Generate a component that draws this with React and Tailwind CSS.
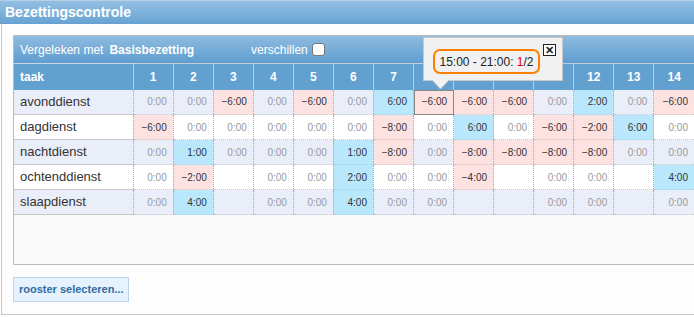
import React from 'react';

// Bezettingscontrole: differences per task and day
const rows = [
  { taak: 'avonddienst', cells: ['0:00', '0:00', '-6:00', '0:00', '-6:00', '0:00', '6:00', '-6:00', '-6:00', '-6:00', '0:00', '2:00', '0:00', '-6:00'] },
  { taak: 'dagdienst', cells: ['-6:00', '0:00', '0:00', '0:00', '0:00', '0:00', '-8:00', '0:00', '6:00', '0:00', '-6:00', '-2:00', '6:00', '0:00'] },
  { taak: 'nachtdienst', cells: ['0:00', '1:00', '0:00', '0:00', '0:00', '1:00', '-8:00', '0:00', '-8:00', '-8:00', '-8:00', '-8:00', '0:00', '0:00'] },
  { taak: 'ochtenddienst', cells: ['0:00', '-2:00', '', '0:00', '0:00', '2:00', '0:00', '0:00', '-4:00', '', '0:00', '0:00', '', '4:00'] },
  { taak: 'slaapdienst', cells: ['0:00', '4:00', '', '0:00', '0:00', '4:00', '0:00', '0:00', '', '', '0:00', '0:00', '', '0:00'] },
];

const days = Array.from({ length: 14 }, (_, i) => i + 1);

function Cell({ value, odd, active }) {
  let bg = odd ? 'bg-[#e9eef9]' : 'bg-white';
  let color = 'text-[#9a9a9a]';
  if (value.startsWith('-')) {
    bg = 'bg-[#fde2e2]';
    color = 'text-[#333]';
  } else if (value && value !== '0:00') {
    bg = 'bg-[#b9e8fd]';
    color = 'text-[#333]';
  }
  return (
    <td
      className={`${bg} ${color} h-[25px] pr-[6px] text-right text-[10px] border-l border-dotted border-l-[#aaa] border-b border-b-[#c8c8c8] ${active ? 'outline outline-1 outline-[#888] -outline-offset-1' : ''}`}
    >
      {value.replace('-', '\u2212')}
    </td>
  );
}

export default function App() {
  return (
    <div className="w-[694px] h-[317px] overflow-hidden bg-white font-['Liberation_Sans',Arial,sans-serif] relative">
      <div className="h-[24px] bg-gradient-to-b from-[#92bfe2] via-[#7db2dc] to-[#68a1d1] border-t border-[#b8cfe3] flex items-center pl-[5px]">
        <span className="text-white font-bold text-[14px]">Bezettingscontrole</span>
      </div>

      <div className="ml-[1px] border-l border-b border-[#c8c8c8] h-[291px] bg-[#fdfdfd] pt-[11px] pl-[11px]">
        <div className="w-[700px] border border-[#bbb] bg-[#fafafa] h-[230px]">
          <div className="h-[27px] bg-gradient-to-b from-[#8ebbe0] to-[#5f9dcf] flex items-center pl-[6px] text-white text-[12px]">
            <span>Vergeleken met</span>
            <span className="font-bold ml-[6px]">Basisbezetting</span>
            <span className="ml-[57px]">verschillen</span>
            <span className="ml-[4px] w-[13px] h-[13px] bg-white border border-[#777] rounded-[3px]"></span>
          </div>

          <table className="table-fixed border-collapse w-[680px]">
            <thead>
              <tr className="bg-[#62a0d0] h-[26px] text-white text-[12px] font-bold">
                <th className="w-[119px] text-left pl-[6px] border-t border-[#c8d8e6]">taak</th>
                {days.map((d) => (
                  <th key={d} className="w-[40px] text-center border-l border-t border-[#c0ccd6]">{d}</th>
                ))}
              </tr>
            </thead>
            <tbody>
              {rows.map((r, ri) => (
                <tr key={r.taak}>
                  <td className={`${ri % 2 === 0 ? 'bg-[#e9eef9]' : 'bg-white'} h-[25px] pl-[6px] text-[13px] text-[#333] border-b border-b-[#c8c8c8]`}>
                    {r.taak}
                  </td>
                  {r.cells.map((v, ci) => (
                    <Cell key={ci} value={v} odd={ri % 2 === 0} active={ri === 0 && ci === 7} />
                  ))}
                </tr>
              ))}
            </tbody>
          </table>
        </div>

        <button className="mt-[12px] h-[25px] w-[116px] bg-[#e6f2fd] border border-[#b9d5ee] text-[#2f6ca3] font-bold text-[11px] flex items-center pl-[5px]">
          rooster selecteren...
        </button>
      </div>

      {/* tooltip over the active cell */}
      <div className="absolute left-[423px] top-[37px] w-[140px] h-[44px] bg-[#f1f1f1] border border-[#c8c8c8]">
        <div className="absolute left-[9px] top-[11px] w-[107px] h-[25px] border-2 border-[#ff8000] rounded-[7px] flex items-center justify-center text-[12px] text-[#222]">
          15:00 - 21:00:&nbsp;<span className="text-[#e00000]">1</span>/2
        </div>
        <div className="absolute left-[119px] top-[6px] w-[13px] h-[12px] bg-white border border-[#222] flex items-center justify-center text-[11px] font-bold leading-none text-[#222]">
          ✕
        </div>
        <svg className="absolute left-[8px] top-[42px]" width="17" height="10" viewBox="0 0 17 10">
          <path d="M0 0 L8.5 9 L17 0 Z" fill="#f1f1f1" />
          <path d="M0 0 L8.5 9 L17 0" fill="none" stroke="#c8c8c8" strokeWidth="1" />
        </svg>
      </div>
    </div>
  );
}
